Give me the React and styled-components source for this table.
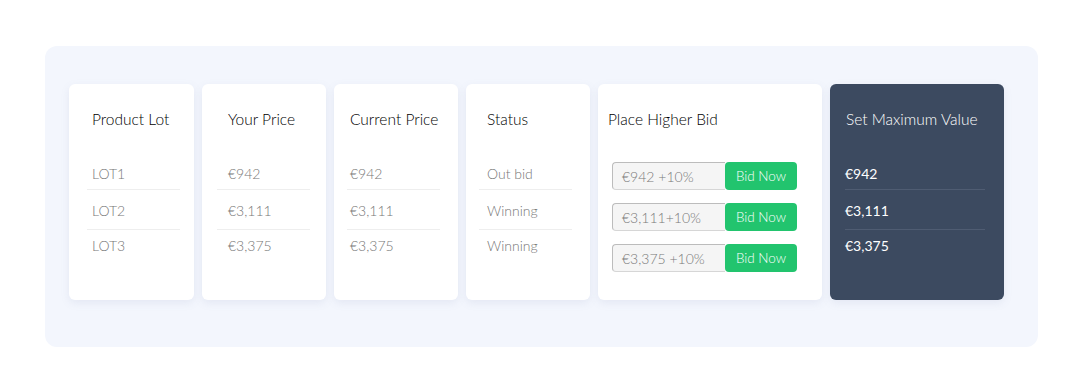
import styled, { createGlobalStyle } from 'styled-components'

const GlobalStyle = createGlobalStyle`
  body {
    margin: 0;
    background: #ffffff;
    font-family: 'Lato', 'Open Sans', sans-serif;
  }
`

const Page = styled.div`
  padding: 46px 46px 37px 45px;
`

const Panel = styled.div`
  background: #f3f6fd;
  border-radius: 12px;
  height: 301px;
  box-sizing: border-box;
  padding: 38px 24px 0;
  display: flex;
  gap: 8px;
  align-items: flex-start;
`

const Card = styled.div`
  width: ${p => p.$w}px;
  height: 216px;
  flex-shrink: 0;
  box-sizing: border-box;
  padding: 24px 0 0 ${p => p.$line}px;
  background: ${p => (p.$dark ? '#3c4a60' : '#ffffff')};
  border-radius: 6px;
  box-shadow: 0 3px 8px rgba(120, 135, 175, 0.12);
`

const Title = styled.h3`
  margin: 0 0 26px;
  padding-left: ${p => p.$indent}px;
  font-size: 15.5px;
  font-weight: 300;
  line-height: 22px;
  white-space: nowrap;
  color: ${p => (p.$dark ? '#ffffff' : '#000000')};
`

const List = styled.div`
  width: ${p => p.$w}px;
  display: flex;
  flex-direction: column;
`

const Row = styled.div`
  padding: 11px 0 8px ${p => p.$indent}px;
  font-size: 14px;
  font-weight: ${p => (p.$dark ? 400 : 300)};
  line-height: 20px;
  color: ${p => (p.$dark ? '#ffffff' : '#777777')};
  border-bottom: 1px solid ${p => (p.$dark ? '#4f5c72' : '#eeeeee')};
  &:first-child {
    padding-top: 8px;
    padding-bottom: 5px;
  }
  &:last-child {
    border-bottom: none;
    padding-top: 6px;
  }
`

const BidList = styled.div`
  display: flex;
  flex-direction: column;
  gap: 13px;
  padding: 6px 0 0 4px;
`

const BidRow = styled.div`
  display: flex;
  height: 28px;
`

const BidInput = styled.div`
  width: 113px;
  box-sizing: border-box;
  padding-left: 9px;
  display: flex;
  align-items: center;
  background: #f5f5f5;
  border: 1px solid #d6d6d6;
  border-top-color: #bcbcbc;
  border-left-color: #bcbcbc;
  border-right: none;
  border-radius: 4px 0 0 4px;
  font-size: 14px;
  font-weight: 300;
  color: #7a7a7a;
  white-space: nowrap;
`

const BidButton = styled.button`
  width: 72px;
  border: none;
  border-radius: 4px;
  background: #22c46e;
  color: #ffffff;
  font-family: inherit;
  font-size: 13.5px;
  font-weight: 300;
  padding: 0;
`

const cols = [
  { title: 'Product Lot', w: 125, line: 18, indent: 5, lw: 93, rows: ['LOT1', 'LOT2', 'LOT3'] },
  { title: 'Your Price', w: 124, line: 15, indent: 11, lw: 93, rows: ['€942', '€3,111', '€3,375'] },
  { title: 'Current Price', w: 124, line: 13, indent: 3, lw: 93, rows: ['€942', '€3,111', '€3,375'] },
  { title: 'Status', w: 124, line: 13, indent: 8, lw: 93, rows: ['Out bid', 'Winning', 'Winning'] },
]

const bids = ['€942 +10%', '€3,111+10%', '€3,375 +10%']

export default function App() {
  return (
    <>
      <GlobalStyle />
      <Page>
        <Panel>
          {cols.map(col => (
            <Card key={col.title} $w={col.w} $line={col.line}>
              <Title $indent={col.indent}>{col.title}</Title>
              <List $w={col.lw}>
                {col.rows.map((r, i) => (
                  <Row key={i} $indent={col.indent}>{r}</Row>
                ))}
              </List>
            </Card>
          ))}
          <Card $w={224} $line={10}>
            <Title $indent={0}>Place Higher Bid</Title>
            <BidList>
              {bids.map(b => (
                <BidRow key={b}>
                  <BidInput>{b}</BidInput>
                  <BidButton>Bid Now</BidButton>
                </BidRow>
              ))}
            </BidList>
          </Card>
          <Card $w={174} $line={15} $dark>
            <Title $indent={1} $dark>Set Maximum Value</Title>
            <List $w={140}>
              {['€942', '€3,111', '€3,375'].map(r => (
                <Row key={r} $indent={0} $dark>{r}</Row>
              ))}
            </List>
          </Card>
        </Panel>
      </Page>
    </>
  )
}
